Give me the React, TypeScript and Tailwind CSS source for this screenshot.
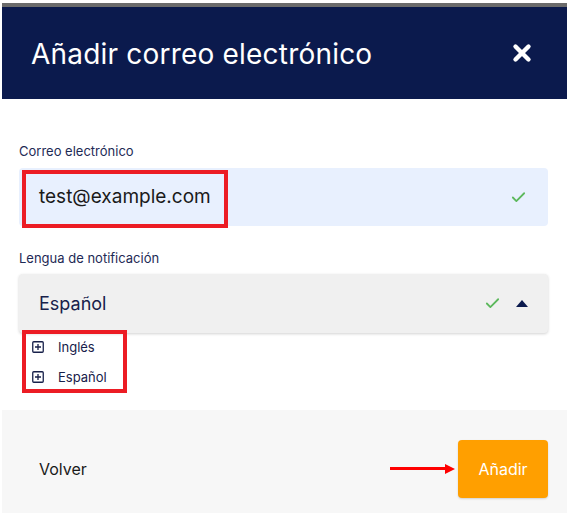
import { X, Check } from "lucide-react";

const font = { fontFamily: "Inter, 'Noto Sans', sans-serif" };

function PlusSquare() {
  return (
    <svg viewBox="0 0 12 12" className="w-[12px] h-[12px]" fill="none" stroke="#17204a" strokeWidth="1.3">
      <rect x="0.75" y="0.75" width="10.5" height="10.5" rx="1" />
      <path d="M6 3v6M3 6h6" />
    </svg>
  );
}

export default function App() {
  return (
    <div className="w-[585px] h-[525px] bg-white pt-[3px] pl-[2px]" style={font}>
      <div className="w-[565px] flex flex-col">
        <div className="h-[4px] bg-[#6b6b6b]" />
        <header className="h-[92px] bg-[#0b1a4d] flex items-center justify-between pl-[29px] pr-[32px]">
          <h1 className="text-white text-[28px] font-normal tracking-[0.2px] mt-[2px]">Añadir correo electrónico</h1>
          <X className="w-[26px] h-[26px] text-white" strokeWidth={4} />
        </header>

        <div className="px-[17px] pt-[44px] pb-[17px] flex flex-col">
          <label className="text-[13px] text-[#1e2a55] leading-[16px]">Correo electrónico</label>
          <div className="relative mt-[9px] h-[58px] w-[529px] bg-[#e8f0fe] rounded-[4px] flex items-center justify-between pl-[20px] pr-[21px]">
            <span className="text-[19px] text-[#1a1a1a]">test@example.com</span>
            <Check className="w-[17px] h-[17px] text-[#5cb85c]" strokeWidth={2.5} />
            <div className="absolute left-[3px] top-[2px] w-[206px] h-[58px] border-[4px] border-[#ec1c24]" />
          </div>

          <label className="mt-[24px] text-[13px] text-[#1e2a55] leading-[16px]">Lengua de notificación</label>
          <div className="mt-[8px] h-[59px] w-[529px] bg-[#f0f0f0] rounded-[4px] shadow-[0_1px_3px_rgba(0,0,0,0.18)] flex items-center justify-between pl-[20px] pr-[20px]">
            <span className="text-[18px] text-[#17204a]">Español</span>
            <div className="flex items-center gap-[15px]">
              <Check className="w-[17px] h-[17px] text-[#5cb85c]" strokeWidth={2.5} />
              <svg viewBox="0 0 12 7" className="w-[12px] h-[7px]">
                <path d="M0 7L6 0l6 7z" fill="#0b1a4d" />
              </svg>
            </div>
          </div>

          <div className="mt-[-3px] ml-[3px] w-[105px] h-[63px] border-[4px] border-[#ec1c24] flex flex-col justify-center gap-[14px] pl-[6px]">
            <div className="flex items-center gap-[14px] leading-[16px]">
              <PlusSquare />
              <span className="text-[13px] text-[#17204a]">Inglés</span>
            </div>
            <div className="flex items-center gap-[14px] leading-[16px]">
              <PlusSquare />
              <span className="text-[13px] text-[#17204a]">Español</span>
            </div>
          </div>
        </div>

        <footer className="h-[103px] bg-[#f7f7f7] flex items-center justify-between pl-[37px] pr-[19px] pt-[14px]">
          <span className="text-[16px] text-[#1a1a1a]">Volver</span>
          <div className="flex items-center gap-[3px]">
            <div className="flex items-center">
              <div className="w-[55px] h-[3px] bg-[#ff0000]" />
              <svg viewBox="0 0 10 10" className="w-[10px] h-[10px]">
                <path d="M0 0L10 5L0 10z" fill="#ff0000" />
              </svg>
            </div>
            <button className="w-[90px] h-[58px] bg-[#ff9f00] rounded-[4px] text-white text-[16px] shadow-[0_1px_2px_rgba(0,0,0,0.15)]">
              Añadir
            </button>
          </div>
        </footer>
      </div>
    </div>
  );
}
